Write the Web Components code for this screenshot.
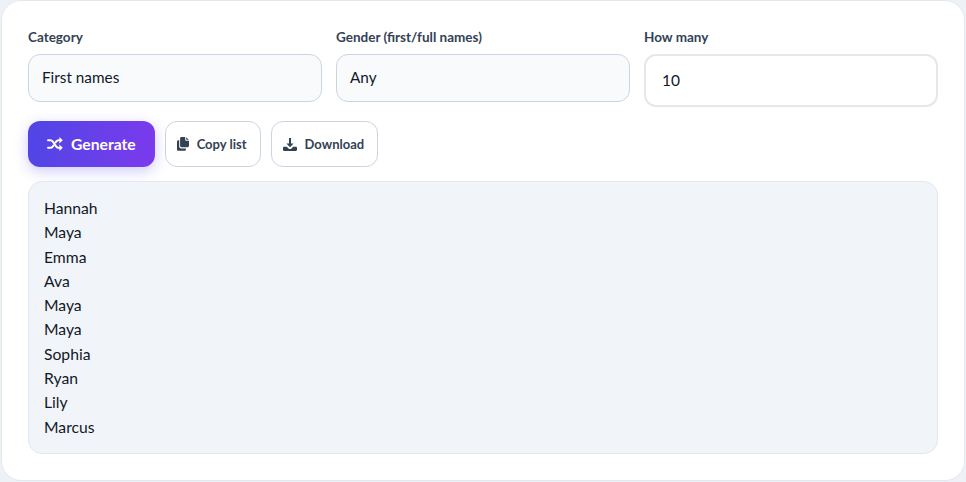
<!DOCTYPE html>
<html lang="en">
<head>
<meta charset="utf-8">
<title>Name generator</title>
<style>
    html, body { margin: 0; height: 100%; background: #eef2f7; }
    body { padding: 0 1px 1px 1px; box-sizing: border-box; overflow: hidden; font-family: "Lato", "Liberation Sans", sans-serif; }
</style>
</head>
<body>
<generator-card>
    <form-row>
        <form-field label="Category">First names</form-field>
        <form-field label="Gender (first/full names)">Any</form-field>
        <form-field label="How many" kind="number">10</form-field>
    </form-row>
    <button-row>
        <action-button kind="primary" icon="shuffle">Generate</action-button>
        <action-button icon="copy">Copy list</action-button>
        <action-button icon="download">Download</action-button>
    </button-row>
    <name-list>Hannah
Maya
Emma
Ava
Maya
Maya
Sophia
Ryan
Lily
Marcus</name-list>
</generator-card>

<script>
const icons = {
    shuffle: '<svg viewBox="0 0 16 14" width="16" height="14"><path d="M1 3.2h2.4c1 0 1.7.4 2.3 1.2l3.6 5.2c.6.8 1.3 1.2 2.3 1.2h2" fill="none" stroke="currentColor" stroke-width="2" stroke-linecap="round"/><path d="M1 10.8h2.4c1 0 1.7-.4 2.3-1.2l.7-1M8.600 5.400l.7-1c.6-.8 1.300-1.200 2.300-1.200h2" fill="none" stroke="currentColor" stroke-width="2" stroke-linecap="round"/><path d="M12.400 0l3.400 3.200-3.400 3.200zM12.400 7.600l3.400 3.200-3.400 3.200z" fill="currentColor"/></svg>',
    copy: '<svg viewBox="0 0 12 14" width="12" height="14"><path d="M4.500 0h3.700v2.800c0 .5.400.9.900.9H12v5.100c0 .8-.6 1.400-1.400 1.400H4.500c-.8 0-1.400-.6-1.400-1.400V1.400C3.100.6 3.700 0 4.500 0zM9.200.2L11.800 2.800H9.200z" fill="currentColor"/><path d="M1.500 3.200h.7v6.300c0 1.100.9 2 2 2h4.700v.9c0 .8-.6 1.400-1.400 1.400H1.500C.700 13.800 0 13.200 0 12.400V4.600c0-.8.700-1.400 1.500-1.400z" fill="currentColor"/></svg>',
    download: '<svg viewBox="0 0 14 13" width="14" height="13"><path d="M6 0h2v5.500h2.600L7 9.300 3.400 5.500H6z" fill="currentColor"/><path d="M1.200 8.700h2.600L6 11h2l2.200-2.300h2.600c.7 0 1.200.5 1.200 1.200v1.900c0 .7-.5 1.200-1.200 1.200H1.200C.5 13 0 12.500 0 11.800V9.900c0-.7.500-1.200 1.200-1.200z" fill="currentColor"/></svg>'
};

class GeneratorCard extends HTMLElement {
    constructor() {
        super();
        this.attachShadow({ mode: 'open' });
        this.shadowRoot.innerHTML = `
            <style>
                :host {
                    display: flex;
                    flex-direction: column;
                    box-sizing: border-box;
                    height: 100%;
                    padding: 28px 26px 26px 26px;
                    background: #fff;
                    border: 1px solid #e3e8ef;
                    border-radius: 20px;
                }
            </style>
            <slot></slot>
        `;
    }
}

class FormRow extends HTMLElement {
    constructor() {
        super();
        this.attachShadow({ mode: 'open' });
        this.shadowRoot.innerHTML = `
            <style>
                :host {
                    display: grid;
                    grid-template-columns: repeat(3, 1fr);
                    column-gap: 14px;
                    align-items: start;
                    height: 92px;
                }
            </style>
            <slot></slot>
        `;
    }
}

class FormField extends HTMLElement {
    constructor() {
        super();
        this.attachShadow({ mode: 'open' });
    }

    connectedCallback() {
        const label = this.getAttribute('label') || '';
        const isNumber = this.getAttribute('kind') === 'number';
        this.shadowRoot.innerHTML = `
            <style>
                :host { display: block; min-width: 0; }
                .label {
                    font-size: 13.5px;
                    line-height: 17px;
                    font-weight: 700;
                    color: #334155;
                    margin-bottom: 8px;
                }
                .box {
                    box-sizing: border-box;
                    height: 48px;
                    padding: 0 13px 2px;
                    display: flex;
                    align-items: center;
                    font-size: 15.3px;
                    color: #111827;
                    background: #f8fafc;
                    border: 1px solid #cbd5e1;
                    border-radius: 12px;
                }
                .box.number {
                    height: 53px;
                    padding: 0 16px 2px;
                    font-size: 15.5px;
                    background: #fff;
                    border: 2px solid #e5e7eb;
                }
            </style>
            <div class="label">${label}</div>
            <div class="box ${isNumber ? 'number' : ''}"><slot></slot></div>
        `;
    }
}

class ButtonRow extends HTMLElement {
    constructor() {
        super();
        this.attachShadow({ mode: 'open' });
        this.shadowRoot.innerHTML = `
            <style>
                :host { display: flex; gap: 10px; height: 46px; }
            </style>
            <slot></slot>
        `;
    }
}

class ActionButton extends HTMLElement {
    constructor() {
        super();
        this.attachShadow({ mode: 'open' });
    }

    connectedCallback() {
        const icon = icons[this.getAttribute('icon')] || '';
        this.shadowRoot.innerHTML = `
            <style>
                :host {
                    display: inline-flex;
                    align-items: center;
                    box-sizing: border-box;
                    height: 46px;
                    gap: 8px;
                    padding: 0 13px 0 11px;
                    font-size: 13px;
                    font-weight: 700;
                    color: #334155;
                    background: #fff;
                    border: 1px solid #cbd5e1;
                    border-radius: 12px;
                }
                :host([kind="primary"]) {
                    gap: 8px;
                    padding: 0 19px 0 19px;
                    font-size: 15.7px;
                    color: #fff;
                    border: 0;
                    background: linear-gradient(100deg, #4f46e5, #7c3aed);
                    box-shadow: 0 4px 14px rgba(79, 70, 229, 0.28);
                }
                svg { display: block; }
            </style>
            ${icon}<slot></slot>
        `;
    }
}

class NameList extends HTMLElement {
    constructor() {
        super();
        this.attachShadow({ mode: 'open' });
        this.shadowRoot.innerHTML = `
            <style>
                :host {
                    display: block;
                    box-sizing: border-box;
                    height: 273px;
                    margin-top: 14px;
                    padding: 14px 15px;
                    font-size: 15.7px;
                    line-height: 24.3px;
                    color: #111827;
                    background: #f1f5f9;
                    border: 1px solid #e2e8f0;
                    border-radius: 14px;
                }
                .names { white-space: pre-line; }
            </style>
            <div class="names"><slot></slot></div>
        `;
    }
}

customElements.define('generator-card', GeneratorCard);
customElements.define('form-row', FormRow);
customElements.define('form-field', FormField);
customElements.define('button-row', ButtonRow);
customElements.define('action-button', ActionButton);
customElements.define('name-list', NameList);
</script>
</body>
</html>
